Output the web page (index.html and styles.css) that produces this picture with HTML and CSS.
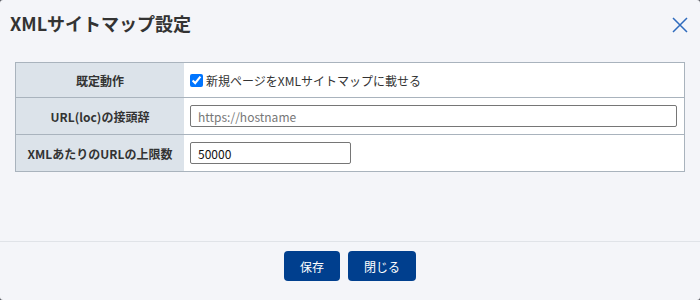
FILE: index.html
```html
<!DOCTYPE html>
<html lang="ja">
<head>
<meta charset="utf-8">
<link rel="stylesheet" href="styles.css">
</head>
<body>
<div class="dialog">
  <div class="header">
    <h1 class="title">XMLサイトマップ設定</h1>
    <button class="close" aria-label="閉じる">
      <svg width="16" height="16" viewBox="0 0 16 16"><path d="M1 1L15 15M15 1L1 15" stroke="#2f6bbd" stroke-width="1.5" fill="none"/></svg>
    </button>
  </div>
  <div class="body">
    <table class="settings">
      <tr class="row1">
        <th>既定動作</th>
        <td><label class="check"><input type="checkbox" checked><span>新規ページをXMLサイトマップに載せる</span></label></td>
      </tr>
      <tr>
        <th>URL(loc)の接頭辞</th>
        <td><input class="text wide" type="text" placeholder="https://hostname"></td>
      </tr>
      <tr>
        <th>XMLあたりのURLの上限数</th>
        <td><input class="text narrow" type="text" value="50000"></td>
      </tr>
    </table>
  </div>
  <div class="footer">
    <button class="btn">保存</button>
    <button class="btn">閉じる</button>
  </div>
</div>
</body>
</html>
```

FILE: styles.css
```css
html, body {
  margin: 0;
  padding: 0;
  background: #55585e;
}
body {
  font-family: "Noto Sans CJK JP", "Noto Sans", sans-serif;
  color: #333;
}
.dialog {
  width: 700px;
  height: 300px;
  background: #f4f5f9;
  border-radius: 3px;
  display: flex;
  flex-direction: column;
  overflow: hidden;
}
.header {
  display: flex;
  align-items: center;
  justify-content: space-between;
  padding: 10px 12px 0 10px;
  height: 26px;
}
.title {
  margin: 0;
  font-size: 18px;
  font-weight: bold;
  line-height: 26px;
  color: #333;
}
.close {
  border: 0;
  background: none;
  padding: 0;
  width: 16px;
  height: 16px;
  margin-top: 4px;
  cursor: pointer;
}
.close svg { display: block; }
.body {
  padding: 26px 15px 0 15px;
  flex: 1;
}
.settings {
  width: 670px;
  border-collapse: collapse;
  border: 1px solid #a9b3bd;
  background: #fff;
  font-size: 12px;
}
.settings th {
  width: 168px;
  background: #dce3ea;
  font-weight: bold;
  text-align: center;
  border-top: 1px solid #a9b3bd;
  padding: 0;
  height: 36px;
}
.settings td {
  border-top: 1px solid #a9b3bd;
  padding: 0 7px 0 6px;
  height: 36px;
}
.row1 th, .row1 td { height: 34px; }
.check {
  display: flex;
  align-items: center;
}
.check input {
  margin: 0 3px 0 0;
  width: 13px;
  height: 13px;
}
.text {
  box-sizing: border-box;
  height: 22px;
  border: 1px solid #767676;
  border-radius: 2px;
  padding: 0 7px;
  font-family: "Noto Sans CJK JP", "Noto Sans", sans-serif;
  font-size: 12px;
  color: #111;
  background: #fff;
  display: block;
}
.text::placeholder { color: #777; }
.wide { width: 100%; }
.narrow { width: 161px; }
.footer {
  border-top: 1px solid #e0e3e8;
  height: 59px;
  display: flex;
  justify-content: center;
  align-items: flex-start;
  gap: 8px;
  padding-top: 9px;
  box-sizing: border-box;
}
.btn {
  height: 30px;
  padding: 0 16px;
  border: 0;
  border-radius: 4px;
  background: #003f8e;
  color: #fff;
  font-family: "Noto Sans CJK JP", "Noto Sans", sans-serif;
  font-size: 12px;
  cursor: pointer;
}
```
